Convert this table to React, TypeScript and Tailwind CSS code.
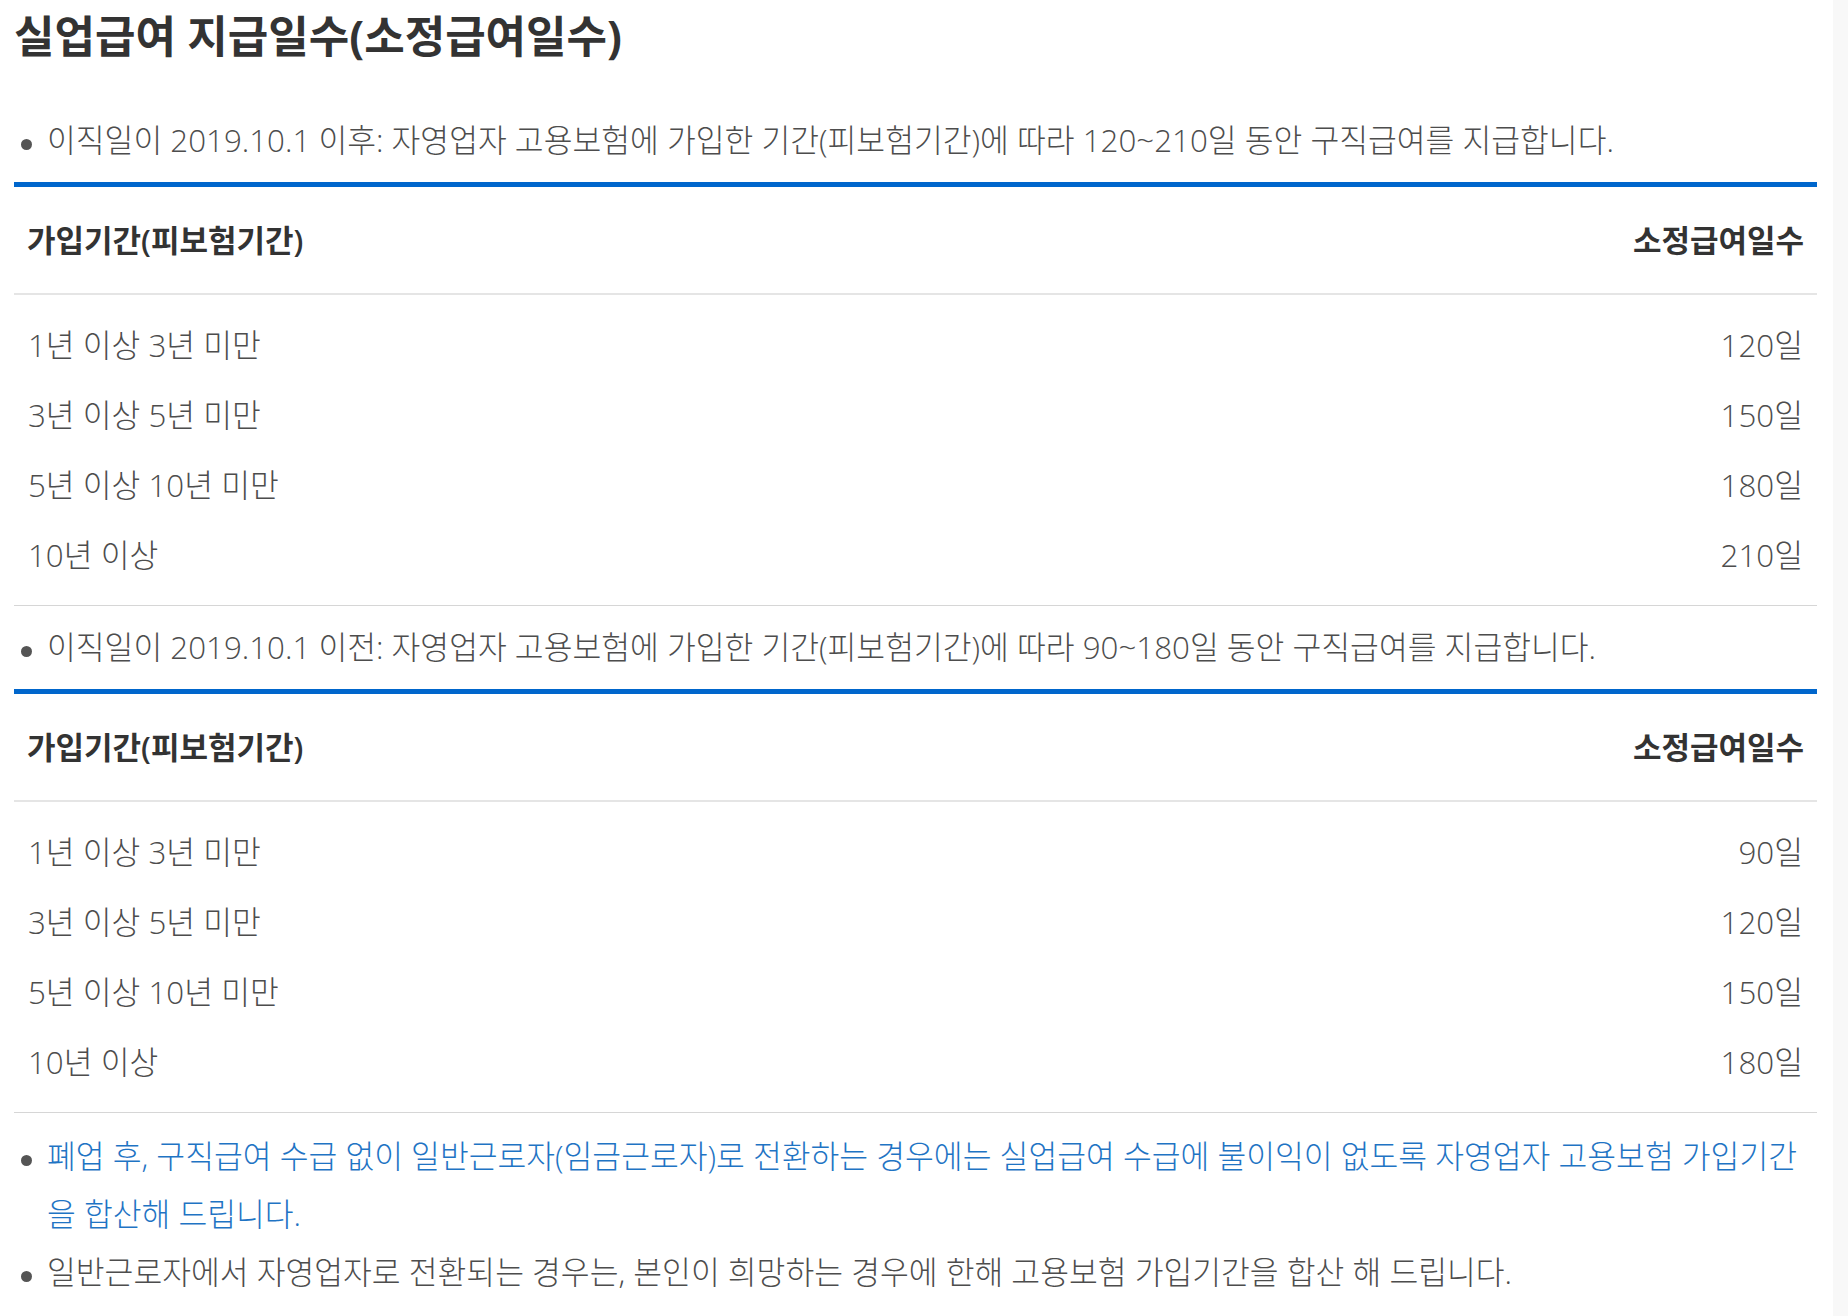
import React from "react";

const FONT = { fontFamily: '"Open Sans", "Noto Sans CJK KR", sans-serif' };

type Row = [string, string];

const rowsAfter: Row[] = [
  ["1년 이상 3년 미만", "120일"],
  ["3년 이상 5년 미만", "150일"],
  ["5년 이상 10년 미만", "180일"],
  ["10년 이상", "210일"],
];

const rowsBefore: Row[] = [
  ["1년 이상 3년 미만", "90일"],
  ["3년 이상 5년 미만", "120일"],
  ["5년 이상 10년 미만", "150일"],
  ["10년 이상", "180일"],
];

function Bullet({ children, blue }: { children: React.ReactNode; blue?: boolean }) {
  return (
    <li className="flex items-start leading-[58px] text-[31.3px] font-light">
      <span className="mt-[28px] ml-[7px] mr-[15px] h-[11px] w-[11px] shrink-0 rounded-full bg-[#555555]" />
      <span className={blue ? "text-[#1f74c4]" : "text-[#4d4d4d]"}>{children}</span>
    </li>
  );
}

function Table({ rows }: { rows: Row[] }) {
  return (
    <div className="mt-[13px] border-t-[5px] border-[#0066cc]">
      <div className="flex h-[108px] items-center justify-between border-b-2 border-[#e5e5e5] px-[13px] text-[31px] font-semibold text-[#333333]">
        <span>가입기간(피보험기간)</span>
        <span>소정급여일수</span>
      </div>
      <div className="border-b border-[#d6d6d6] pt-[15px] pb-[15px]">
        {rows.map(([a, b]) => (
          <div
            key={a}
            className="flex h-[70px] items-center justify-between px-[14px] text-[31.3px] font-light text-[#4d4d4d]"
          >
            <span>{a}</span>
            <span>{b}</span>
          </div>
        ))}
      </div>
    </div>
  );
}

export default function App() {
  return (
    <div className="flex min-h-screen bg-white" style={FONT}>
      <div className="flex-1 pl-[14px] pr-[16px] pt-[8px]">
        <h1 className="text-[44px] font-bold leading-[56px] text-[#333333]">
          실업급여 지급일수(소정급여일수)
        </h1>
        <ul className="mt-[47px]">
          <Bullet>
            이직일이 2019.10.1 이후: 자영업자 고용보험에 가입한 기간(피보험기간)에 따라 120~210일 동안 구직급여를 지급합니다.
          </Bullet>
        </ul>
        <Table rows={rowsAfter} />
        <ul className="mt-[12px]">
          <Bullet>
            이직일이 2019.10.1 이전: 자영업자 고용보험에 가입한 기간(피보험기간)에 따라 90~180일 동안 구직급여를 지급합니다.
          </Bullet>
        </ul>
        <Table rows={rowsBefore} />
        <ul className="mt-[14px]">
          <Bullet blue>
            <span className="whitespace-nowrap">
              폐업 후, 구직급여 수급 없이 일반근로자(임금근로자)로 전환하는 경우에는 실업급여 수급에 불이익이 없도록 자영업자 고용보험 가입기간
            </span>
            <br />을 합산해 드립니다.
          </Bullet>
          <Bullet>
            일반근로자에서 자영업자로 전환되는 경우는, 본인이 희망하는 경우에 한해 고용보험 가입기간을 합산 해 드립니다.
          </Bullet>
        </ul>
      </div>
      <div className="w-[15px] shrink-0 bg-[#f8f8f8]" />
    </div>
  );
}
